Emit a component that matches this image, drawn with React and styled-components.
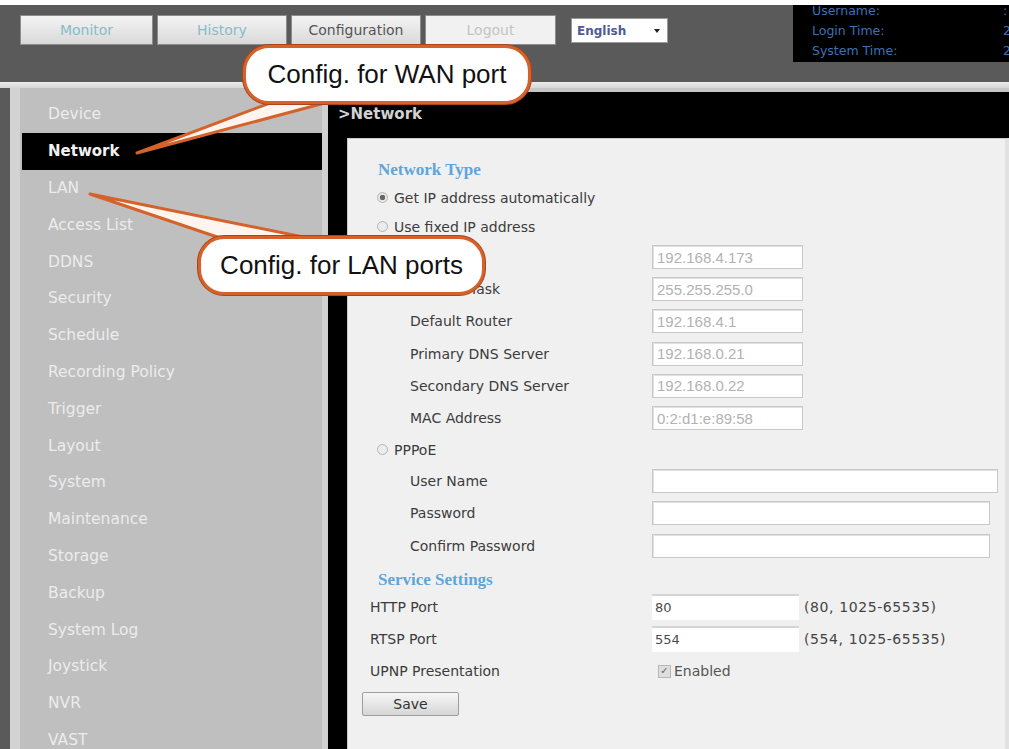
import React from 'react'
import styled, { createGlobalStyle } from 'styled-components'

const GlobalStyle = createGlobalStyle`
  html, body {
    margin: 0;
    padding: 0;
    background: #fff;
    overflow: hidden;
  }
  * { box-sizing: border-box; }
`

const Page = styled.div`
  position: relative;
  width: 1009px;
  height: 749px;
  overflow: hidden;
  padding-top: 5px;
  display: flex;
  flex-direction: column;
  font-family: 'DejaVu Sans', Verdana, sans-serif;
`

/* ---------- top bar ---------- */
const TopBar = styled.header`
  height: 77px;
  flex-shrink: 0;
  background: #5a5a5a;
  display: flex;
  align-items: flex-start;
  padding-left: 20px;
`

const Tabs = styled.nav`
  display: flex;
  gap: 4px;
  margin-top: 10px;
`

const Tab = styled.button`
  width: ${p => p.$w}px;
  height: 30px;
  padding: 0;
  border: 1px solid #8c8c8c;
  background: ${p => (p.$flat ? '#f1f1f1' : 'linear-gradient(#f4f4f4, #d9d9d9)')};
  color: ${p => p.$tone};
  font: 14px 'DejaVu Sans', Verdana, sans-serif;
`

const LangSelect = styled.div`
  width: 97px;
  height: 25px;
  margin: 13px 0 0 15px;
  background: #fff;
  border: 1px solid #9a9a9a;
  display: flex;
  align-items: center;
  justify-content: space-between;
  padding: 0 7px 0 5px;
  font: bold 12px 'DejaVu Sans', Verdana, sans-serif;
  color: #4c5b98;

  &::after {
    content: '';
    border: 3px solid transparent;
    border-top: 4px solid #222;
    margin-top: 4px;
  }
`

const InfoBox = styled.div`
  margin-left: auto;
  width: 216px;
  height: 57px;
  background: #000;
  overflow: hidden;
`

const InfoList = styled.dl`
  margin: -4px 0 0;
  padding-left: 19px;
  display: grid;
  grid-template-columns: 191px auto;
  font: 12.5px/20px 'DejaVu Sans', Verdana, sans-serif;
  color: #3e70b4;
  white-space: nowrap;

  dt, dd { margin: 0; }
`

const Divider = styled.div`
  height: 6px;
  flex-shrink: 0;
  background: linear-gradient(#ececec, #d6d6d6);
`

/* ---------- body ---------- */
const Main = styled.div`
  flex: 1;
  display: flex;
  min-height: 0;
`

const Sidebar = styled.aside`
  width: 328px;
  flex-shrink: 0;
  background: #bfbfbf;
  border-left: 10px solid #5a5a5a;
  border-right: 6px solid #d0d0d0;
  box-shadow: inset 10px 0 0 #d3d3d3;
  padding: 8px 0 0 12px;
`

const MenuItem = styled.div`
  height: 36.8px;
  display: flex;
  align-items: center;
  padding-left: 26px;
  font-size: ${p => (p.$active ? 15 : 15.5)}px;
  font-weight: ${p => (p.$active ? 'bold' : 'normal')};
  color: ${p => (p.$active ? '#f2f2f2' : '#ececec')};
  background: ${p => (p.$active ? '#000' : 'transparent')};
  white-space: nowrap;
`

const Content = styled.section`
  flex: 1;
  display: flex;
  flex-direction: column;
  background: #000;
  border-top: 4px solid #c6c6c6;
`

const Title = styled.div`
  height: 46px;
  flex-shrink: 0;
  display: flex;
  align-items: center;
  padding: 0 0 2px 10px;
  font: bold 15px 'DejaVu Sans', Verdana, sans-serif;
  color: #d2d2d2;
`

const Panel = styled.div`
  flex: 1;
  margin-left: 19px;
  background: #f0f0f0;
  border-top: 1px solid #cacaca;
  border-left: 1px solid #cacaca;
  border-right: 4px solid #e2e2e2;
  padding: 18px 0 0 22px;
  color: #3c3c3c;
  font-size: 14px;
`

const Heading = styled.h3`
  margin: 0 0 0 8px;
  height: ${p => p.$h}px;
  padding-top: ${p => p.$pad}px;
  font: bold 17px/25px 'Liberation Serif', 'Times New Roman', serif;
  color: #5ca6dc;
`

const RadioRow = styled.label`
  height: ${p => p.$h}px;
  display: flex;
  align-items: center;
  gap: 6px;
  padding-left: 7px;
`

const Radio = styled.span`
  width: 11px;
  height: 11px;
  border-radius: 50%;
  border: 1px solid #b4b4b4;
  background: ${p => (p.$on ? 'radial-gradient(circle, #666 0 2.5px, #e6e6e6 3px)' : '#ececec')};
`

const FieldRow = styled.div`
  height: 32.2px;
  display: grid;
  grid-template-columns: 282px auto auto;
  justify-content: start;
  align-items: center;
`

const Label = styled.span`
  padding-left: ${p => p.$indent || 0}px;
  white-space: nowrap;
`

const TextBox = styled.div`
  width: ${p => p.$w}px;
  height: 24px;
  background: #fff;
  border: 1px solid #c8c8c8;
  box-shadow: inset 1px 1px 0 #e2e2e2;
  padding: 0 4px;
  display: flex;
  align-items: center;
  font: 15px 'Liberation Sans', Arial, sans-serif;
  color: #b2b2b2;
  white-space: nowrap;
`

const PortBox = styled.div`
  width: 147px;
  height: 26px;
  background: #fff;
  border-top: 2px solid #d4d4d4;
  padding: 0 3px;
  display: flex;
  align-items: center;
  font-size: 13px;
  color: #4a4a4a;
`

const Hint = styled.span`
  margin-left: 5px;
  letter-spacing: 0.6px;
  color: #444;
`

const CheckLabel = styled.label`
  display: flex;
  align-items: center;
  gap: 3px;
  padding-left: 6px;
  color: #555;
`

const CheckBox = styled.span`
  width: 13px;
  height: 13px;
  border: 1px solid #b8b8b8;
  background: #dedede;
  display: flex;
  align-items: center;
  justify-content: center;
  font-size: 10px;
  line-height: 1;
  color: #666;
`

const SaveButton = styled.button`
  margin: 5px 0 0 -8px;
  width: 97px;
  height: 24px;
  border: 1px solid #9d9d9d;
  border-radius: 2px;
  background: linear-gradient(#f6f6f6, #d6d6d6);
  font: 14px 'DejaVu Sans', Verdana, sans-serif;
  color: #333;
`

/* ---------- annotation callouts ---------- */
const Tails = styled.svg`
  position: absolute;
  inset: 0;
  pointer-events: none;
`

const Bubble = styled.div`
  position: absolute;
  left: ${p => p.$x}px;
  top: ${p => p.$y}px;
  width: ${p => p.$w}px;
  height: ${p => p.$h}px;
  background: #fff;
  border: 3px solid #d5622a;
  border-radius: 26px;
  box-shadow: 0 0 0 1px #a9461a;
  display: flex;
  align-items: center;
  justify-content: center;
  font: 26px 'Liberation Sans', Arial, sans-serif;
  color: #111;
  white-space: nowrap;
`

const menu = [
  'Device', 'Network', 'LAN', 'Access List', 'DDNS', 'Security', 'Schedule',
  'Recording Policy', 'Trigger', 'Layout', 'System', 'Maintenance', 'Storage',
  'Backup', 'System Log', 'Joystick', 'NVR', 'VAST',
]

const fixedIp = [
  ['IP Address', '192.168.4.173'],
  ['Subnet Mask', '255.255.255.0'],
  ['Default Router', '192.168.4.1'],
  ['Primary DNS Server', '192.168.0.21'],
  ['Secondary DNS Server', '192.168.0.22'],
  ['MAC Address', '0:2:d1:e:89:58'],
]

const pppoe = [
  ['User Name', 346],
  ['Password', 338],
  ['Confirm Password', 338],
]

export default function App() {
  return (
    <Page>
      <GlobalStyle />
      <TopBar>
        <Tabs>
          <Tab $w={133} $tone="#86bcc6">Monitor</Tab>
          <Tab $w={130} $tone="#86bcc6">History</Tab>
          <Tab $w={130} $tone="#555">Configuration</Tab>
          <Tab $w={131} $tone="#c4c4c4" $flat>Logout</Tab>
        </Tabs>
        <LangSelect>English</LangSelect>
        <InfoBox>
          <InfoList>
            <dt>Username:</dt><dd>:</dd>
            <dt>Login Time:</dt><dd>2013/05/21 10:12</dd>
            <dt>System Time:</dt><dd>2013/05/21 10:30</dd>
          </InfoList>
        </InfoBox>
      </TopBar>
      <Divider />
      <Main>
        <Sidebar>
          {menu.map(item => (
            <MenuItem key={item} $active={item === 'Network'}>{item}</MenuItem>
          ))}
        </Sidebar>
        <Content>
          <Title>&gt;Network</Title>
          <Panel>
            <Heading $h={26} $pad={0}>Network Type</Heading>
            <RadioRow $h={29}><Radio $on />Get IP address automatically</RadioRow>
            <RadioRow $h={29}><Radio />Use fixed IP address</RadioRow>
            {fixedIp.map(([label, value]) => (
              <FieldRow key={label}>
                <Label $indent={40}>{label}</Label>
                <TextBox $w={151}>{value}</TextBox>
              </FieldRow>
            ))}
            <RadioRow $h={31}><Radio />PPPoE</RadioRow>
            {pppoe.map(([label, w]) => (
              <FieldRow key={label}>
                <Label $indent={40}>{label}</Label>
                <TextBox $w={w} />
              </FieldRow>
            ))}
            <Heading $h={29} $pad={5}>Service Settings</Heading>
            <FieldRow>
              <Label>HTTP Port</Label>
              <PortBox>80</PortBox>
              <Hint>(80, 1025-65535)</Hint>
            </FieldRow>
            <FieldRow>
              <Label>RTSP Port</Label>
              <PortBox>554</PortBox>
              <Hint>(554, 1025-65535)</Hint>
            </FieldRow>
            <FieldRow>
              <Label>UPNP Presentation</Label>
              <CheckLabel><CheckBox>✓</CheckBox>Enabled</CheckLabel>
            </FieldRow>
            <SaveButton>Save</SaveButton>
          </Panel>
        </Content>
      </Main>

      <Tails width="1009" height="749">
        <g fill="#fff4ee" stroke="#d5622a" strokeWidth="3" strokeLinejoin="round">
          <polygon points="278,100 336,100 137,153" />
          <polygon points="232,242 318,240 90,194" />
        </g>
      </Tails>
      <Bubble $x={243} $y={45} $w={288} $h={59}>Config. for WAN port</Bubble>
      <Bubble $x={198} $y={236} $w={287} $h={59}>Config. for LAN ports</Bubble>
    </Page>
  )
}
